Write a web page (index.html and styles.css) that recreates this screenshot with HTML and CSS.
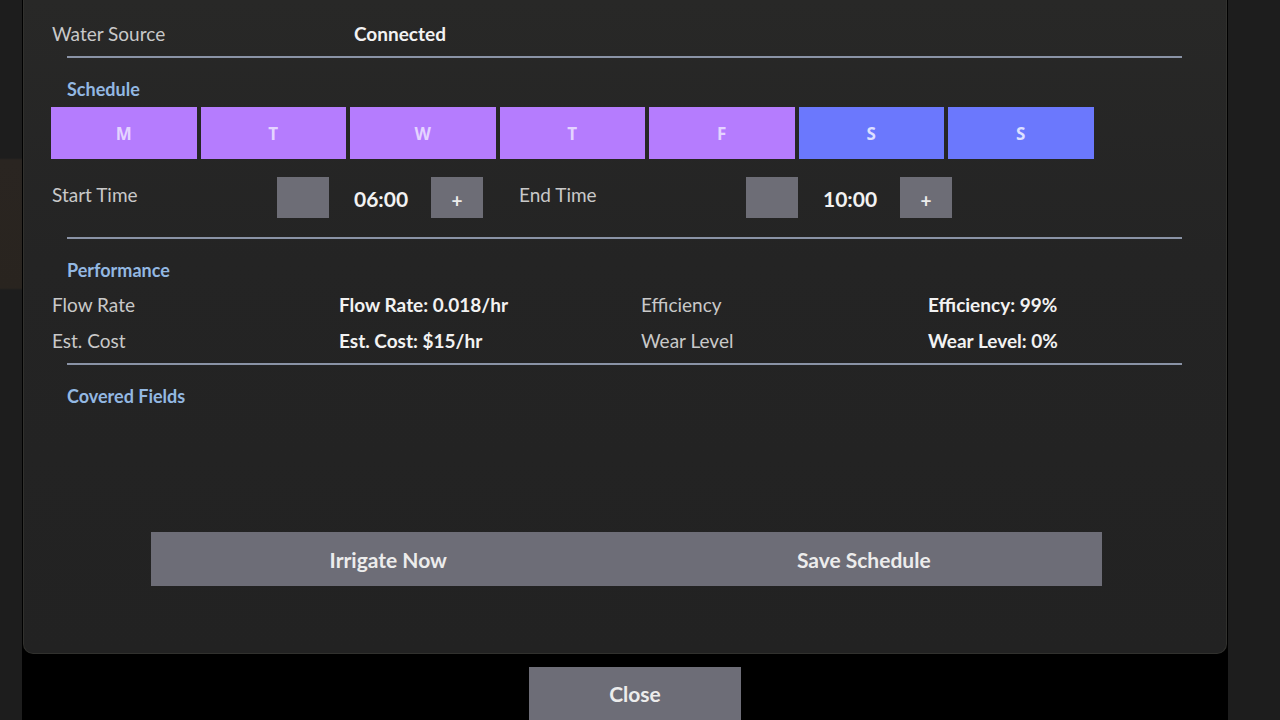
FILE: index.html
```html
<!DOCTYPE html>
<html lang="en">
<head>
<meta charset="utf-8">
<title>Sprinkler Settings</title>
<link rel="stylesheet" href="styles.css">
</head>
<body>
<div class="stage">
  <div class="modal">
    <section class="panel">
      <div class="info-row">
        <span class="label">Water Source</span>
        <span class="value">Connected</span>
      </div>
      <hr class="divider">

      <h3 class="section-title">Schedule</h3>
      <div class="days">
        <button class="day weekday">M</button>
        <button class="day weekday">T</button>
        <button class="day weekday">W</button>
        <button class="day weekday">T</button>
        <button class="day weekday">F</button>
        <button class="day weekend">S</button>
        <button class="day weekend">S</button>
      </div>
      <div class="times">
        <div class="time-group">
          <span class="label time-label">Start Time</span>
          <button class="step"></button>
          <span class="time-value">06:00</span>
          <button class="step">+</button>
        </div>
        <div class="time-group">
          <span class="label time-label time-label-end">End Time</span>
          <button class="step"></button>
          <span class="time-value">10:00</span>
          <button class="step">+</button>
        </div>
      </div>
      <hr class="divider divider-2">

      <h3 class="section-title">Performance</h3>
      <div class="perf">
        <span class="label">Flow Rate</span>
        <span class="value">Flow Rate: 0.018/hr</span>
        <span class="label">Efficiency</span>
        <span class="value">Efficiency: 99%</span>
        <span class="label">Est. Cost</span>
        <span class="value">Est. Cost: $15/hr</span>
        <span class="label">Wear Level</span>
        <span class="value">Wear Level: 0%</span>
      </div>
      <hr class="divider divider-3">

      <h3 class="section-title">Covered Fields</h3>
      <div class="fields"></div>

      <div class="actions">
        <button class="action">Irrigate Now</button>
        <button class="action">Save Schedule</button>
      </div>
    </section>
    <div class="footer">
      <button class="close">Close</button>
    </div>
  </div>
</div>
</body>
</html>
```

FILE: styles.css
```css
* { box-sizing: border-box; }

html, body {
  margin: 0;
  height: 720px;
  overflow: hidden;
}

body {
  background:
    linear-gradient(to bottom, transparent 158px, #2a2521 160px, #29241f 288px, transparent 290px) left top / 22px 100% no-repeat,
    #1d1d1d;
  font-family: Lato, "Noto Sans", sans-serif;
  color: #cfcfcf;
}

.stage {
  display: flex;
  height: 720px;
  padding-left: 22px;
}

.modal {
  width: 1206px;
  height: 720px;
  background: #000;
  display: flex;
  flex-direction: column;
  overflow: hidden;
}

.panel {
  flex-shrink: 0;
  margin: 0 1px;
  height: 654px;
  background: linear-gradient(to bottom, #282827 0%, #242424 40%, #222222 100%);
  border: 1px solid #31312e;
  border-top: none;
  border-radius: 0 0 10px 10px;
  padding: 22px 28px 0 28px;
  display: flex;
  flex-direction: column;
}

button {
  font-family: inherit;
  border: none;
  padding: 0;
  cursor: pointer;
}

.label {
  font-size: 19px;
  color: #c9c9c9;
}

.value {
  font-size: 19px;
  font-weight: 700;
  color: #f2f2f2;
}

.info-row {
  display: grid;
  grid-template-columns: 302px auto;
  line-height: 24px;
}

.divider {
  margin: 10px 16px 0 15px;
  border: none;
  height: 2px;
  background: #8a93a6;
}

.divider-2 { margin-top: 19px; }
.divider-3 { margin-top: 5px; }

.section-title {
  margin: 21px 0 0 15px;
  font-size: 18px;
  line-height: 20px;
  font-weight: 700;
  color: #93b8e2;
}

.days {
  display: flex;
  gap: 4px;
  margin: 8px 0 0 -1px;
}

.day {
  width: 145.5px;
  height: 52px;
  font-size: 17px;
  font-weight: 700;
  font-family: "Open Sans", Lato, sans-serif;
}

.weekday {
  background: #b57cfe;
  color: #e4d4ff;
}

.weekend {
  background: #6b78fd;
  color: #dde0ff;
}

.times {
  display: flex;
  gap: 36px;
  margin-top: 18px;
}

.time-group {
  display: flex;
  align-items: center;
  height: 41px;
  flex-shrink: 0;
}

.time-label {
  width: 225px;
  padding-bottom: 6px;
}

.time-label-end {
  width: 227px;
}

.step {
  width: 52px;
  height: 41px;
  background: #6d6d76;
  color: #ececec;
  font-size: 19px;
  font-weight: 700;
  line-height: 41px;
  padding-top: 3px;
}

.time-value {
  width: 77px;
  margin-left: 25px;
  font-size: 21px;
  font-weight: 700;
  color: #f2f2f2;
  padding-top: 2px;
}

.perf {
  display: grid;
  grid-template-columns: 287px 302px 287px auto;
  grid-auto-rows: 36px;
  align-items: center;
  margin-top: 6px;
}

.fields {
  height: 126px;
}

.actions {
  display: flex;
  width: 951px;
  margin: 0 auto;
  transform: translateX(1px);
}

.action {
  flex: 1;
  height: 54px;
  background: #6d6d77;
  color: #ececec;
  font-size: 21px;
  font-weight: 700;
}

.footer {
  display: flex;
  justify-content: center;
  padding: 13px 0 0 20px;
  flex-shrink: 0;
}

.close {
  width: 212px;
  height: 60px;
  background: #6d6d77;
  color: #ececec;
  font-size: 21px;
  font-weight: 700;
  padding-bottom: 8px;
}
```
